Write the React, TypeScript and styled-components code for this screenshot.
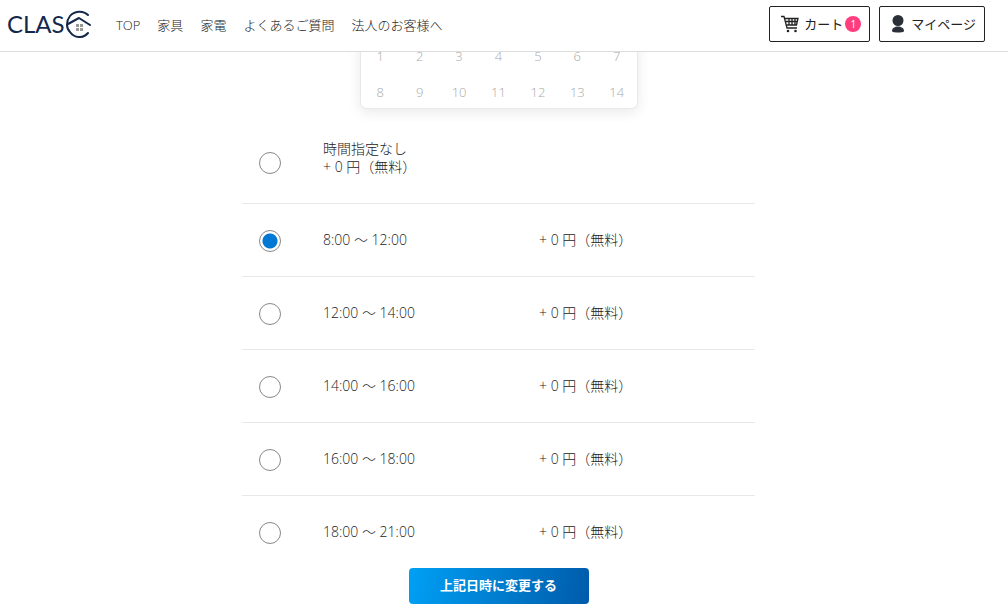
import React, { useState } from 'react';
import styled, { createGlobalStyle } from 'styled-components';

const GlobalStyle = createGlobalStyle`
  *, *::before, *::after { box-sizing: border-box; }
  body {
    margin: 0;
    background: #fff;
    color: #222;
    font-family: 'Open Sans', 'Noto Sans CJK JP', sans-serif;
    font-size: 14px;
    font-weight: 300;
    line-height: 18px;
  }
`;

const Header = styled.header`
  position: fixed;
  top: 0;
  left: 0;
  right: 0;
  z-index: 10;
  display: flex;
  align-items: center;
  height: 52px;
  padding: 0 23px 4px 7px;
  background: #fff;
  border-bottom: 1px solid #ddd;
`;

const Logo = styled.a`
  display: flex;
  align-items: center;
  width: 86px;
  color: #14284b;
  font-family: Lato, sans-serif;
  font-size: 24px;
  font-weight: 400;
  line-height: 28px;
  text-decoration: none;
`;

const LogoMark = styled.svg`
  flex: none;
  width: 28px;
  height: 28px;
  margin-left: -1px;
`;

const Nav = styled.nav`
  display: flex;
  flex: 1;
  gap: 17px;
  margin-left: 23px;
  padding-top: 2px;
`;

const NavLink = styled.a`
  color: #222;
  font-size: 13px;
  text-decoration: none;
  white-space: nowrap;
`;

const Actions = styled.div`
  display: flex;
  gap: 9px;
`;

const ActionLink = styled.a`
  display: flex;
  align-items: center;
  height: 36px;
  padding: 0 8px 0 11px;
  border: 1px solid #222;
  border-radius: 2px;
  color: #222;
  font-size: 13px;
  font-weight: 400;
  text-decoration: none;
  white-space: nowrap;
`;

const ActionIcon = styled.svg<{ $gap: number }>`
  flex: none;
  width: 18px;
  height: 18px;
  margin-right: ${(p) => p.$gap}px;
`;

const Badge = styled.span`
  width: 16px;
  height: 16px;
  margin-left: 2px;
  border-radius: 50%;
  background: #ff3d7f;
  color: #fff;
  font-size: 10px;
  font-weight: 400;
  line-height: 16px;
  text-align: center;
`;

const Main = styled.main`
  display: flex;
  flex-direction: column;
  align-items: center;
  padding: 0 11px 11px 0;
`;

const Calendar = styled.section`
  width: 278px;
  padding-top: 36px;
  border: 1px solid #e8e8e8;
  border-top: 0;
  border-radius: 6px;
  box-shadow: 0 3px 14px rgba(0, 0, 0, 0.09);
`;

const Days = styled.table`
  width: 100%;
  border-collapse: collapse;
  table-layout: fixed;
`;

const Day = styled.td`
  height: 36px;
  padding: 4px 0 0;
  color: #aaa;
  font-size: 13px;
  text-align: center;
`;

const Form = styled.form`
  display: flex;
  flex-direction: column;
  align-items: center;
  width: 100%;
`;

const Slots = styled.fieldset`
  width: 100%;
  max-width: 513px;
  min-width: 0;
  margin: 0;
  padding: 0;
  border: 0;
`;

const Slot = styled.label<{ $stacked?: boolean }>`
  display: grid;
  grid-template-columns: 64px 216px 1fr;
  align-items: center;
  min-height: 73px;
  padding: ${(p) => (p.$stacked ? '31px 0 27px 17px' : '0 0 0 17px')};
  border-bottom: 1px solid #e8e8e8;
  cursor: pointer;

  &:last-child {
    min-height: 72px;
    border-bottom: 0;
  }
`;

const Radio = styled.input<{ $lowered?: boolean }>`
  appearance: none;
  width: 22px;
  height: 22px;
  margin: ${(p) => (p.$lowered ? '10px' : '2px')} 0 0;
  border: 1px solid #888;
  border-radius: 50%;
  background: #fff;

  &:checked {
    background: radial-gradient(circle, #0078d4 0 7px, #fff 8px);
  }
`;

const Line = styled.span`
  display: block;
`;

const Submit = styled.button`
  width: 180px;
  height: 36px;
  padding: 0 0 3px;
  border: 0;
  border-radius: 4px;
  background: linear-gradient(100deg, #00a0f5, #005baa);
  color: #fff;
  font-family: inherit;
  font-size: 13px;
  font-weight: 700;
  cursor: pointer;
`;

const navItems = ['TOP', '家具', '家電', 'よくあるご質問', '法人のお客様へ'];
const weeks = [
  [1, 2, 3, 4, 5, 6, 7],
  [8, 9, 10, 11, 12, 13, 14],
];
const times = ['8:00 ～ 12:00', '12:00 ～ 14:00', '14:00 ～ 16:00', '16:00 ～ 18:00', '18:00 ～ 21:00'];
const price = '+ 0 円（無料）';

export default function App() {
  const [selected, setSelected] = useState(times[0]);

  return (
    <>
      <GlobalStyle />
      <Header>
        <Logo href="#">
          CLAS
          <LogoMark viewBox="0 0 28 28" fill="none" aria-hidden="true">
            <g stroke="#14284b" strokeWidth="2" strokeLinecap="round">
              <path d="M24 5C19 0 10 1 6 6C2 11 2 18 6 22C10 28 19 29 24 23" />
              <path d="M4 14L15 8L26 15" strokeLinejoin="round" />
            </g>
            <path d="M12 14h3v3h-3zM16 14h3v3h-3zM12 18h3v3h-3zM16 18h3v3h-3z" fill="#999" />
          </LogoMark>
        </Logo>
        <Nav>
          {navItems.map((item) => (
            <NavLink href="#" key={item}>{item}</NavLink>
          ))}
        </Nav>
        <Actions>
          <ActionLink href="#">
            <ActionIcon $gap={5} viewBox="0 0 18 18" fill="none" stroke="#222" aria-hidden="true">
              <path d="M0 1.5h3L6 13h10M3.5 3.5H17L15.5 10H5.5M4 6.5h12.5M8 3.5V10M11 3.5V10M14 3.5V10" strokeWidth="1.3" />
              <circle cx="7" cy="16" r="1.3" fill="#222" stroke="none" />
              <circle cx="14.5" cy="16" r="1.3" fill="#222" stroke="none" />
            </ActionIcon>
            カート
            <Badge>1</Badge>
          </ActionLink>
          <ActionLink href="#">
            <ActionIcon $gap={2} viewBox="0 0 18 18" fill="#2b2f38" aria-hidden="true">
              <circle cx="7" cy="5.5" r="5.5" />
              <path d="M1 16c0-6 12-6 12 0c0 2-12 2-12 0z" />
            </ActionIcon>
            マイページ
          </ActionLink>
        </Actions>
      </Header>
      <Main>
        <Calendar>
          <Days>
            <tbody>
              {weeks.map((week) => (
                <tr key={week[0]}>
                  {week.map((day) => <Day key={day}>{day}</Day>)}
                </tr>
              ))}
            </tbody>
          </Days>
        </Calendar>
        <Form onSubmit={(e: React.FormEvent) => e.preventDefault()}>
          <Slots>
            <Slot $stacked>
              <Radio $lowered type="radio" name="slot" checked={selected === 'none'} onChange={() => setSelected('none')} />
              <span>
                <Line>時間指定なし</Line>
                <Line>{price}</Line>
              </span>
            </Slot>
            {times.map((time) => (
              <Slot key={time}>
                <Radio type="radio" name="slot" checked={selected === time} onChange={() => setSelected(time)} />
                <span>{time}</span>
                <span>{price}</span>
              </Slot>
            ))}
          </Slots>
          <Submit type="submit">上記日時に変更する</Submit>
        </Form>
      </Main>
    </>
  );
}
